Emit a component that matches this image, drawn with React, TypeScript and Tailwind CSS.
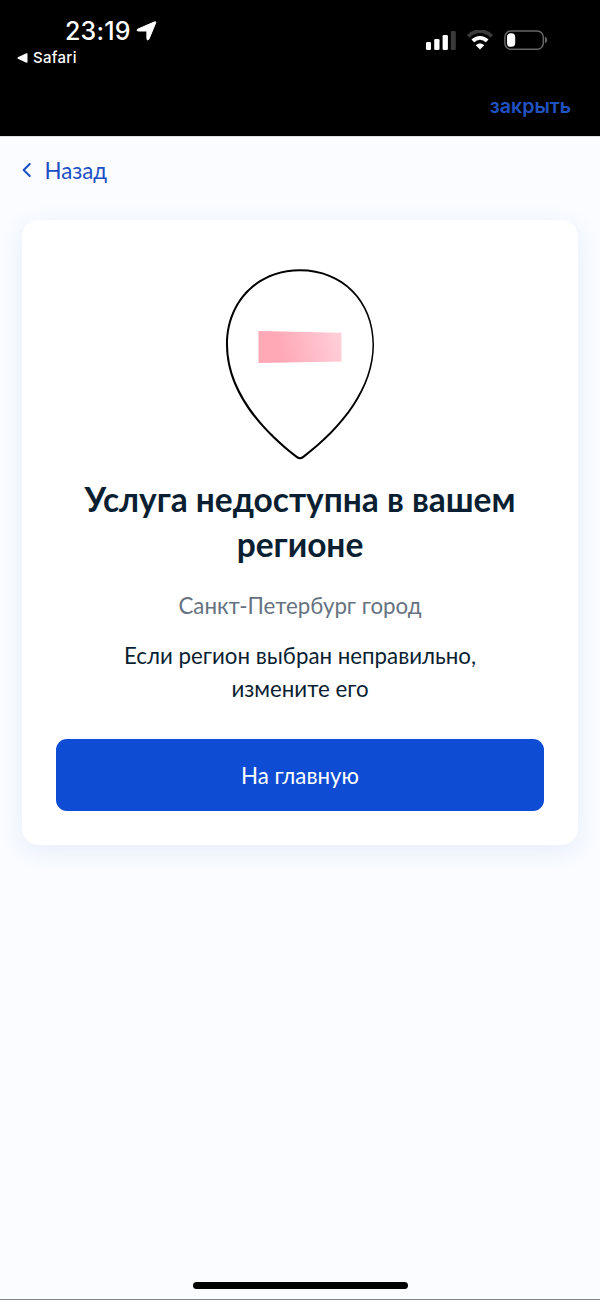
import React from 'react';

function SignalIcon() {
  return (
    <svg width="31" height="20" viewBox="0 0 31 20" fill="#fff" aria-hidden="true">
      <rect x="1" y="12" width="5" height="8" rx="1.3" />
      <rect x="9.2" y="9" width="5.3" height="11" rx="1.3" />
      <rect x="17.6" y="5" width="5.3" height="15" rx="1.3" />
      <rect x="25.8" y="1" width="5" height="19" rx="1.3" fill="#3a3a3a" />
    </svg>
  );
}

function WifiIcon() {
  return (
    <svg width="28" height="20" viewBox="0 0 28 20" fill="none" aria-hidden="true">
      <path d="M2.2 6.3C9 -0.5 19 -0.5 25.8 6.3" stroke="#3a3a3a" strokeWidth="3.8" />
      <path d="M6.8 10.9C11 6.8 17 6.8 21.2 10.9" stroke="#fff" strokeWidth="3.8" />
      <path d="M9.7 15.2C12.2 12.9 15.8 12.9 18.3 15.2L14 19.4Z" fill="#fff" />
    </svg>
  );
}

function BatteryIcon() {
  return (
    <svg width="44" height="20" viewBox="0 0 44 20" aria-hidden="true">
      <rect x="0.9" y="0.9" width="38.4" height="18.4" rx="6" fill="none" stroke="#666" strokeWidth="1.5" />
      <rect x="3" y="3.2" width="8.2" height="13.6" rx="3.8" fill="#fff" />
      <path d="M41 6.8C43.9 7.8 43.9 12.4 41 13.4Z" fill="#666" />
    </svg>
  );
}

function StatusBar() {
  return (
    <div className="flex h-[80px] justify-between">
      <div className="pl-[17px] pt-[16px]">
        <div className="flex h-[30px] items-center pl-[48px]">
          <span className="font-['Inter',sans-serif] text-[25px] font-medium leading-[30px] tracking-[0.2px]">23:19</span>
          <svg className="ml-[5px]" width="21" height="20" viewBox="0 0 21 20" fill="#fff" stroke="#fff" strokeWidth="1" strokeLinejoin="round" aria-hidden="true">
            <path d="M18.7 0.8C19.5 0.5 20 1 19.7 1.9L13 18C12.4 19.4 10.9 19.2 10.9 17.7V11Q10.9 10 9.9 10H2.4C0.8 10 0.5 8.7 1.9 8.1Z" />
          </svg>
        </div>
        <div className="flex h-5 items-center gap-[6px] pt-[3px]">
          <svg width="11" height="10" viewBox="0 0 11 10" fill="#fff" aria-hidden="true">
            <path d="M0.8 4.2L9.4 0.3Q10.5 0 10.5 1V9Q10.5 10 9.4 9.7L0.8 5.8Q0 5 0.8 4.2Z" />
          </svg>
          <span className="-ml-px font-['Inter',sans-serif] text-[15px] font-medium leading-5 tracking-[0.3px]">Safari</span>
        </div>
      </div>
      <div className="mt-[30px] flex h-5 gap-[10px] pr-[52px]">
        <SignalIcon />
        <WifiIcon />
        <BatteryIcon />
      </div>
    </div>
  );
}

function RegionPin() {
  return (
    <svg width="150" height="192" viewBox="0 0 150 192" aria-hidden="true">
      <defs>
        <linearGradient id="bar" x1="0" x2="1" y1="0.1" y2="0">
          <stop offset="0.2" stopColor="#ffa8b6" />
          <stop offset="1" stopColor="#ffd0da" />
        </linearGradient>
      </defs>
      {/* outer and inner contours, the line is thinner on the right side */}
      <path
        fillRule="evenodd"
        d="M75 0.3C118 0.3 149 32 149 75.5C149 119 119 158 79 188.7Q75 191.8 71 188.7C31 158 1 119 1 75.5C1 32 32 0.3 75 0.3ZM75 2.2C33 2.2 3 33 3 75.5C3 118 33 157 72.3 187.1Q75 189.2 77.7 187.1C117 157 147.5 118 147.5 75.5C147.5 33 117 2.2 75 2.2Z"
      />
      <path d="M33.5 62L116.5 63.8V92.5L33.5 94Z" fill="url(#bar)" />
    </svg>
  );
}

export default function App() {
  return (
    <div className="flex h-[1300px] w-[600px] flex-col border-b border-[#858588] bg-[#fafcff] font-['Lato',sans-serif] text-[#0b1f33]">
      <header className="h-[136px] bg-black text-white">
        <StatusBar />
        <div className="flex justify-end pr-[29px] pt-[14px]">
          <button className="font-['Inter',sans-serif] text-[19.6px] font-semibold leading-6 text-[#2152c2]">закрыть</button>
        </div>
      </header>

      <main className="flex-1 border-t border-[#dedfe3] px-[22px]">
        <button className="mt-[17px] flex h-8 items-center text-[22.3px] leading-8 text-[#1d4fc4]">
          <svg className="mr-[14px]" width="9" height="14" viewBox="0 0 9 14" fill="none" stroke="currentColor" strokeWidth="2" aria-hidden="true">
            <path d="M7.7 1L1.7 7L7.7 13" strokeLinecap="round" strokeLinejoin="round" />
          </svg>
          <span className="-ml-[0.5px] pt-px">Назад</span>
        </button>

        <section className="mt-[34px] flex h-[625px] flex-col items-center rounded-[17px] bg-white px-[34px] pt-[49px] text-center shadow-[0_6px_24px_rgba(60,110,200,0.11)]">
          <RegionPin />
          <h1 className="mt-[16px] text-[33.5px] font-bold leading-[45px] tracking-[-0.02px]">
            Услуга недоступна в вашем регионе
          </h1>
          <p className="mt-[22px] text-[22.3px] leading-[33px] text-[#66727f]">Санкт-Петербург город</p>
          <p className="mt-[17px] w-[390px] text-[22.3px] leading-[33px]">
            Если регион выбран неправильно, измените его
          </p>
          <button className="mt-[34px] h-[72px] w-full rounded-[11px] bg-[#0d4cd3] pt-px text-[22.3px] text-white">
            На главную
          </button>
        </section>
      </main>

      <div className="mx-auto mb-[10px] h-[7px] w-[215px] rounded-full bg-black" />
    </div>
  );
}
